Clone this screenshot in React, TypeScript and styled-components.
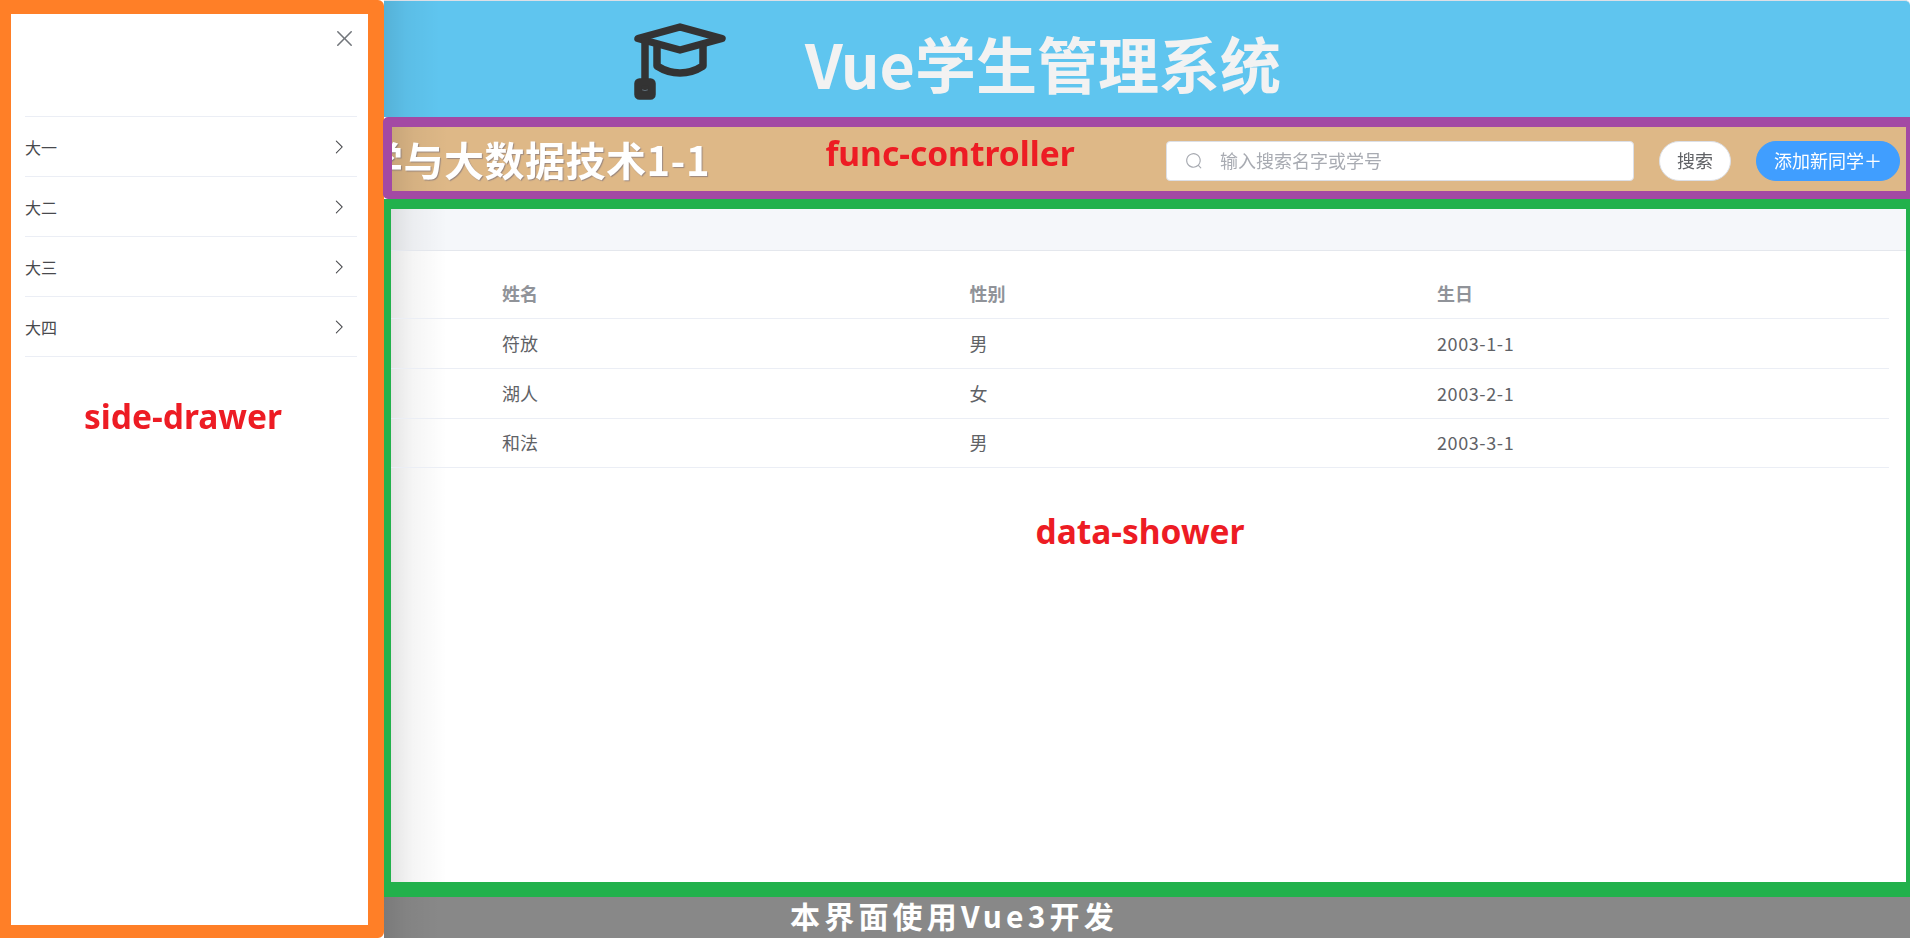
import styled, { createGlobalStyle, css } from "styled-components";

const GlobalStyle = createGlobalStyle`
  html, body {
    margin: 0;
    padding: 0;
    height: 100%;
    background: #fff;
    font-family: "Noto Sans CJK SC", "Noto Sans", sans-serif;
  }
  * {
    box-sizing: border-box;
  }
`;

// the drawer's shadow falls on the panels, but not on the coloured frames drawn on top
const drawerShade = css`
  background-image: linear-gradient(
    to right,
    rgba(0, 0, 0, 0.1),
    rgba(0, 0, 0, 0.04) 22px,
    rgba(0, 0, 0, 0) 56px
  );
`;

const Page = styled.div`
  position: relative;
  height: 100vh;
  overflow: hidden;
`;

const Main = styled.div`
  height: 100%;
  margin-left: 384px;
  display: flex;
  flex-direction: column;
`;

const Header = styled.header`
  height: 117px;
  flex-shrink: 0;
  padding-left: 216px;
  display: flex;
  align-items: center;
  gap: 45px;
  background-color: #5fc5ef;
  border-top: 1px solid #dcdfe6;
  border-top-right-radius: 5px;
  ${drawerShade}

  svg {
    margin-top: 4px;
  }
`;

const AppTitle = styled.h1`
  margin: 6px 0 0;
  font-size: 61px;
  line-height: 1;
  font-weight: 700;
  color: #f2f2f2;
  white-space: nowrap;
`;

const FuncBar = styled.div`
  height: 82px;
  flex-shrink: 0;
  margin-left: -1px;
  padding: 14px 6px 0 0;
  display: flex;
  align-items: flex-start;
  position: relative;
  z-index: 3;
  background-color: #deb887;
  border: solid #a349a4;
  border-width: 10px 4px 8px 9px;
  border-radius: 5px 0 0 5px;
  ${drawerShade}
`;

const ClassTitle = styled.div`
  width: 318px;
  height: 50px;
  margin-top: -7px;
  overflow: hidden;
  display: flex;
  justify-content: flex-end;
  font-size: 40px;
  line-height: 50px;
  font-weight: 700;
  letter-spacing: 0.5px;
  color: #fff;
  white-space: nowrap;
  text-shadow: 1px 1px 1px rgba(90, 90, 120, 0.5);
`;

const SearchBox = styled.div`
  width: 468px;
  height: 40px;
  margin-left: auto;
  padding: 0 0 3px 18px;
  display: flex;
  align-items: center;
  gap: 17px;
  background: #fff;
  border: 1px solid #dcdfe6;
  border-radius: 4px;
  color: #a8abb2;
  font-size: 18px;

  svg {
    margin-top: 3px;
  }
`;

const PillButton = styled.button<{ $primary?: boolean }>`
  height: 40px;
  margin-left: 25px;
  padding: 0 17px 2px;
  border: 1px solid ${(props) => (props.$primary ? "#409eff" : "#dcdfe6")};
  border-radius: 20px;
  background: ${(props) => (props.$primary ? "#409eff" : "#fff")};
  color: ${(props) => (props.$primary ? "#fff" : "#606266")};
  font-family: inherit;
  font-size: 18px;
  white-space: nowrap;
`;

const DataPanel = styled.section`
  flex: 1;
  min-height: 0;
  background-color: #fff;
  border: solid #22b14c;
  border-width: 10px 4px 15px 7px;
  ${drawerShade}
`;

const TabBar = styled.div`
  height: 42px;
  background-color: #f5f7fa;
  border-bottom: 1px solid #e4e7ed;
  ${drawerShade}
`;

const Table = styled.div`
  margin: 18px 17px 0 0;
`;

const Row = styled.div<{ $head?: boolean }>`
  height: 50px;
  padding-bottom: 2px;
  display: grid;
  grid-template-columns: 111px repeat(3, 467.5px);
  align-items: center;
  border-bottom: 1px solid #ebeef5;
  font-size: 18px;
  font-weight: ${(props) => (props.$head ? 700 : 400)};
  color: ${(props) => (props.$head ? "#909399" : "#606266")};

  &:last-child {
    height: 49px;
  }
`;

const DateCell = styled.span`
  letter-spacing: 0.6px;
`;

const Footer = styled.footer`
  height: 41px;
  flex-shrink: 0;
  padding: 0 386px 6px 0;
  display: flex;
  justify-content: center;
  align-items: center;
  background-color: #888;
  color: #fff;
  font-size: 30px;
  font-weight: 700;
  letter-spacing: 4.2px;
  white-space: nowrap;
  ${drawerShade}
`;

const Drawer = styled.aside`
  position: fixed;
  top: 0;
  bottom: 0;
  left: 0;
  z-index: 2;
  width: 384px;
  padding: 0 11px 0 14px;
  background: #fff;
  background-clip: padding-box;
  border: solid #ff7f27;
  border-width: 14px 16px 13px 11px;
  border-radius: 0 6px 6px 0;
`;

const DrawerHead = styled.div`
  height: 102px;
  padding-top: 12px;
  display: flex;
  justify-content: flex-end;
  align-items: flex-start;
  color: #72767b;
`;

const GradeList = styled.ul`
  margin: 0;
  padding: 0;
  list-style: none;
  border-top: 1px solid #ebeef5;
`;

const GradeItem = styled.li`
  height: 60px;
  padding: 0 9px 0 0;
  display: flex;
  justify-content: space-between;
  align-items: center;
  border-bottom: 1px solid #ebeef5;
  font-size: 16px;
  color: #48494d;
`;

const Annotation = styled.div<{ $x: number; $y: number }>`
  position: absolute;
  left: ${(props) => props.$x}px;
  top: ${(props) => props.$y}px;
  z-index: 5;
  transform: translate(-50%, -50%);
  font-family: "Noto Sans", sans-serif;
  font-size: 33.5px;
  font-weight: 700;
  color: #ed1c24;
  white-space: nowrap;
`;

function ElIcon({ d, size }: { d: string; size: number }) {
  return (
    <svg width={size} height={size} viewBox="0 0 1024 1024" fill="currentColor">
      <path d={d} />
    </svg>
  );
}

const closePath =
  "M764.288 214.592 512 466.88 259.712 214.592a31.936 31.936 0 0 0-45.12 45.12L466.752 512 214.528 764.224a31.936 31.936 0 1 0 45.12 45.184L512 557.184l252.288 252.288a31.936 31.936 0 0 0 45.12-45.12L557.12 512.064l252.288-252.352a31.936 31.936 0 1 0-45.12-45.184z";
const arrowPath =
  "M340.864 149.312a30.59 30.59 0 0 0 0 42.752L652.736 512 340.864 831.872a30.59 30.59 0 0 0 0 42.752 29.12 29.12 0 0 0 41.728 0L714.24 533.312a32 32 0 0 0 0-42.688L382.592 149.376a29.12 29.12 0 0 0-41.728 0z";
const searchPath =
  "m795.904 750.72 124.992 124.928a32 32 0 0 1-45.248 45.248L750.656 795.904a416 416 0 1 1 45.248-45.248zM480 832a352 352 0 1 0 0-704 352 352 0 0 0 0 704z";

function CapLogo() {
  return (
    <svg width="160" height="100" viewBox="0 0 160 100" fill="none" stroke="#333" strokeWidth="7.5" strokeLinecap="round" strokeLinejoin="round">
      <path d="M38 27.5 80 16l42 11.5L80 39z" />
      <path d="M45 30v38" />
      <path d="M57 36v19q11 7 23 7t23-7V35" />
      <rect x="38" y="71" width="14" height="14" rx="1.5" fill="#333" />
      <path d="M42.5 79q2.500 1.500 5 0" stroke="#6b7c88" strokeWidth="0.8" />
    </svg>
  );
}

const grades = ["大一", "大二", "大三", "大四"];

const students = [
  { name: "符放", gender: "男", birthday: "2003-1-1" },
  { name: "湖人", gender: "女", birthday: "2003-2-1" },
  { name: "和法", gender: "男", birthday: "2003-3-1" },
];

export default function App() {
  return (
    <Page>
      <GlobalStyle />
      <Main>
        <Header>
          <CapLogo />
          <AppTitle>Vue学生管理系统</AppTitle>
        </Header>
        <FuncBar>
          <ClassTitle>数据科学与大数据技术1-1</ClassTitle>
          <SearchBox>
            <ElIcon d={searchPath} size={18} />
            输入搜索名字或学号
          </SearchBox>
          <PillButton>搜索</PillButton>
          <PillButton $primary>添加新同学＋</PillButton>
        </FuncBar>
        <DataPanel>
          <TabBar />
          <Table>
            <Row $head>
              <span />
              <span>姓名</span>
              <span>性别</span>
              <span>生日</span>
            </Row>
            {students.map((student) => (
              <Row key={student.name}>
                <span />
                <span>{student.name}</span>
                <span>{student.gender}</span>
                <DateCell>{student.birthday}</DateCell>
              </Row>
            ))}
          </Table>
        </DataPanel>
        <Footer>本界面使用Vue3开发</Footer>
      </Main>
      <Drawer>
        <DrawerHead>
          <ElIcon d={closePath} size={25} />
        </DrawerHead>
        <GradeList>
          {grades.map((grade) => (
            <GradeItem key={grade}>
              <span>{grade}</span>
              <ElIcon d={arrowPath} size={18} />
            </GradeItem>
          ))}
        </GradeList>
      </Drawer>
      <Annotation $x={183} $y={416}>side-drawer</Annotation>
      <Annotation $x={950} $y={153}>func-controller</Annotation>
      <Annotation $x={1140} $y={531}>data-shower</Annotation>
    </Page>
  );
}
